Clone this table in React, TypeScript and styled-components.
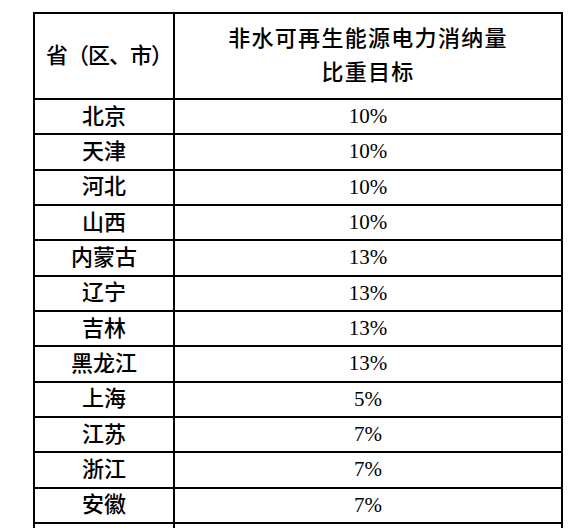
import React from 'react'
import styled, { createGlobalStyle } from 'styled-components'

const GlobalStyle = createGlobalStyle`
  html, body {
    margin: 0;
    padding: 0;
    background: #fff;
    overflow: hidden;
  }
`

const Page = styled.div`
  padding: 12px 0 0 33px;
`

const Table = styled.table`
  border-collapse: collapse;
  table-layout: fixed;
  width: 530px;
  color: #000;
  font-family: 'Liberation Serif', 'Noto Sans CJK SC', serif;
  font-weight: 500;
`

const HeadRow = styled.tr`
  height: 86px;
`

const Row = styled.tr`
  height: 35.33px;
`

const Cell = styled.td<{ $num?: boolean }>`
  border: 2px solid #000;
  padding: 0;
  text-align: center;
  vertical-align: middle;
  font-size: ${p => (p.$num ? '21px' : '22px')};
  line-height: 1;
`

const HeadCell = styled.th<{ $tight?: boolean }>`
  border: 2px solid #000;
  padding: ${p => (p.$tight ? '0 0 0 10px' : '0')};
  text-align: center;
  vertical-align: middle;
  font-size: 22px;
  font-weight: 500;
  line-height: 34px;
  letter-spacing: ${p => (p.$tight ? '-1px' : '1.3px')};
`

const Line = styled.div`
  display: block;
`

const targets: [string, number][] = [
  ['北京', 10],
  ['天津', 10],
  ['河北', 10],
  ['山西', 10],
  ['内蒙古', 13],
  ['辽宁', 13],
  ['吉林', 13],
  ['黑龙江', 13],
  ['上海', 5],
  ['江苏', 7],
  ['浙江', 7],
  ['安徽', 7],
]

const App: React.FC = () => (
  <>
    <GlobalStyle />
    <Page>
      <Table>
        <colgroup>
          <col style={{ width: 140 }} />
          <col style={{ width: 388 }} />
        </colgroup>
        <thead>
          <HeadRow>
            <HeadCell $tight>省（区、市）</HeadCell>
            <HeadCell>
              <Line>非水可再生能源电力消纳量</Line>
              <Line>比重目标</Line>
            </HeadCell>
          </HeadRow>
        </thead>
        <tbody>
          {targets.map(([region, pct]) => (
            <Row key={region}>
              <Cell>{region}</Cell>
              <Cell $num>{pct}%</Cell>
            </Row>
          ))}
          <Row>
            <Cell />
            <Cell $num />
          </Row>
        </tbody>
      </Table>
    </Page>
  </>
)

export default App
